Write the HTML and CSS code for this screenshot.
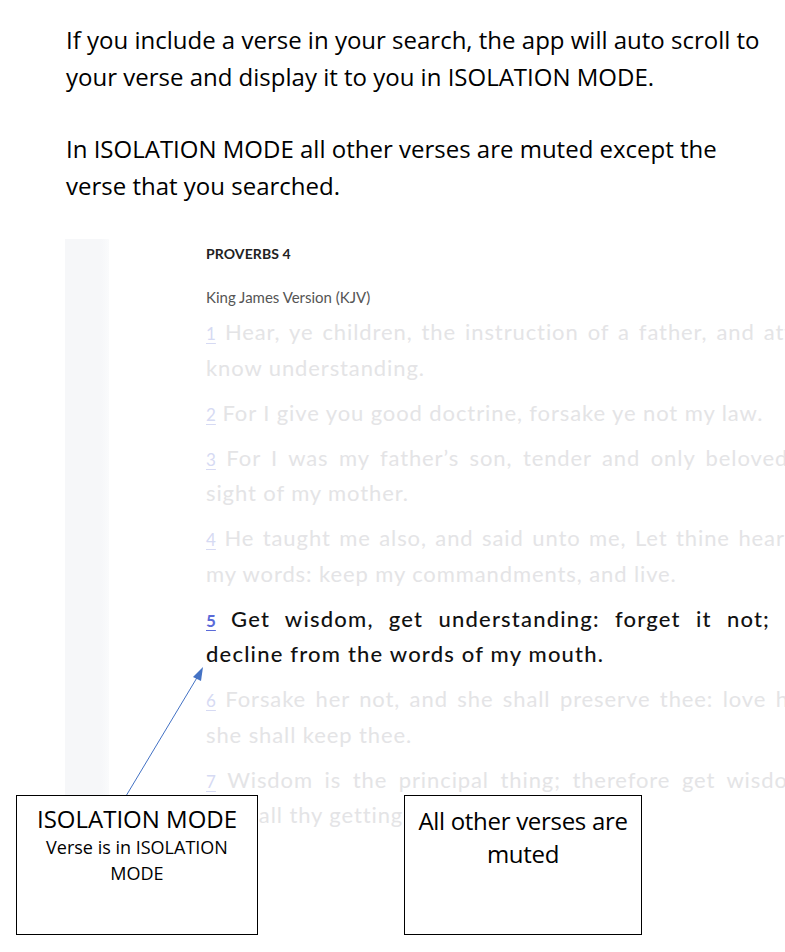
FILE: index.html
```html
<!DOCTYPE html>
<html lang="en">
<head>
<meta charset="utf-8">
<title>Isolation mode</title>
<link rel="stylesheet" href="styles.css">
</head>
<body>
<div class="page">
  <div class="intro">
    <p>If you include a verse in your search, the app will auto scroll to your verse and display it to you in ISOLATION MODE.</p>
    <p>In ISOLATION MODE all other verses are muted except the verse that you searched.</p>
  </div>

  <div class="shot">
    <div class="sidebar"></div>
    <div class="reader">
      <div class="book">PROVERBS 4</div>
      <div class="version">King James Version (KJV)</div>
      <p class="verse muted"><a class="num">1</a> Hear, ye children, the instruction of a father, and attend to know understanding.</p>
      <p class="verse muted"><a class="num">2</a> For I give you good doctrine, forsake ye not my law.</p>
      <p class="verse muted"><a class="num">3</a> For I was my father’s son, tender and only beloved in the sight of my mother.</p>
      <p class="verse muted"><a class="num">4</a> He taught me also, and said unto me, Let thine heart retain my words: keep my commandments, and live.</p>
      <p class="verse active"><a class="num">5</a> Get wisdom, get understanding: forget it not; neither decline from the words of my mouth.</p>
      <p class="verse muted"><a class="num">6</a> Forsake her not, and she shall preserve thee: love her, and she shall keep thee.</p>
      <p class="verse muted"><a class="num">7</a> Wisdom is the principal thing; therefore get wisdom: and with all thy getting get understanding.</p>
    </div>
  </div>

  <svg class="arrow" width="785" height="952" viewBox="0 0 785 952">
    <line x1="126" y1="796" x2="198" y2="676" stroke="#4472c4" stroke-width="1"/>
    <polygon points="203,667 193,677 201,681" fill="#4472c4"/>
  </svg>

  <div class="callout callout-left">
    <div class="callout-title">ISOLATION MODE</div>
    <div class="callout-sub">Verse is in ISOLATION MODE</div>
  </div>
  <div class="callout callout-right">
    <div class="callout-title">All other verses are muted</div>
  </div>
</div>
</body>
</html>
```
FILE: styles.css
```css
html, body {
  margin: 0;
  padding: 0;
  background: #ffffff;
  overflow: hidden;
}

.page {
  position: relative;
  width: 785px;
  height: 952px;
  overflow: hidden;
}

.intro {
  padding: 21px 0 0 66px;
  width: 705px;
  font-family: "Open Sans", "Liberation Sans", sans-serif;
  font-stretch: 93%;
  font-size: 24px;
  line-height: 37px;
  color: #000;
}

.intro p {
  margin: 0 0 35px 0;
}

.shot {
  display: flex;
  margin-top: 20px;
  padding-left: 65px;
}

.sidebar {
  width: 44px;
  flex: none;
  height: 696px;
  background: linear-gradient(to right, #f6f7f9 0, #f6f7f9 36px, #fafbfc 44px);
}

.reader {
  flex: none;
  width: 657px;
  padding-left: 97px;
  font-family: "Lato", "Liberation Sans", sans-serif;
}

.book {
  font-size: 14px;
  font-weight: 700;
  color: #222;
  margin-top: 5px;
  line-height: 20px;
  letter-spacing: 0.1px;
}

.version {
  font-size: 15px;
  color: #555;
  line-height: 20px;
  margin-top: 23px;
}

.verse {
  margin: 5px 0 9.5px 0;
  font-size: 22px;
  line-height: 35.5px;
  letter-spacing: 0.9px;
  text-align: justify;
}

.version + .verse {
  margin-top: 7px;
}

.num {
  font-size: 17px;
  line-height: 1;
  letter-spacing: 0;
  text-decoration: underline;
  text-underline-offset: 3px;
}

.muted {
  color: #e4e4e6;
}

.muted .num {
  color: #d6daf3;
}

.active {
  color: #111;
  font-weight: 500;
  letter-spacing: 1.2px;
}

.active .num {
  color: #5a6ad8;
  font-weight: 700;
}

.arrow {
  position: absolute;
  left: 0;
  top: 0;
  pointer-events: none;
}

.callout {
  position: absolute;
  top: 795px;
  height: 140px;
  box-sizing: border-box;
  border: 1px solid #000;
  background: #fff;
  text-align: center;
  font-family: "Open Sans", "Liberation Sans", sans-serif;
  font-stretch: 93%;
  color: #000;
}

.callout-left {
  left: 16px;
  width: 242px;
  padding: 8px 6px 0;
}

.callout-right {
  left: 404px;
  width: 238px;
  padding: 8px 3px 0;
}

.callout-title {
  font-size: 24px;
  line-height: 33px;
}

.callout-right .callout-title {
  letter-spacing: -0.3px;
}

.callout-left .callout-title {
  line-height: 30px;
}

.callout-sub {
  font-size: 18px;
  line-height: 26px;
  padding: 0 14px;
}
```
